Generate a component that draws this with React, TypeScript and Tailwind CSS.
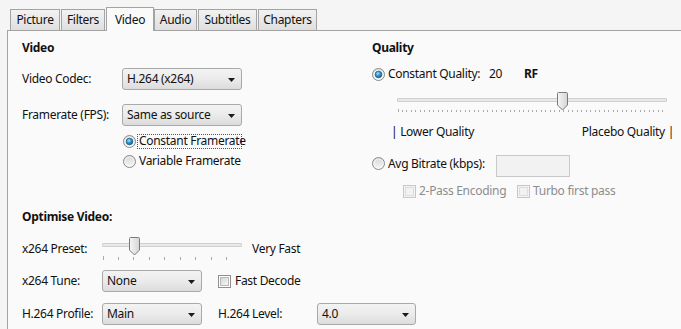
import React, { useId } from "react";

function Radio({ checked }: { checked?: boolean }) {
  const id = useId().replace(/:/g, "");
  return (
    <svg width="13" height="13" viewBox="0 0 13 13" className="shrink-0">
      <defs>
        <linearGradient id={`g${id}`} x1="0" y1="0" x2="0" y2="1">
          <stop offset="0" stopColor="#d6d6d6" />
          <stop offset="1" stopColor="#f7f7f7" />
        </linearGradient>
        <radialGradient id={`b${id}`} cx="0.4" cy="0.35" r="0.7">
          <stop offset="0" stopColor="#9fe0ff" />
          <stop offset="0.5" stopColor="#2b9ad6" />
          <stop offset="1" stopColor="#0b5a8c" />
        </radialGradient>
      </defs>
      <circle cx="6.5" cy="6.5" r="6" fill={`url(#g${id})`} stroke="#8a8a8a" />
      <circle cx="6.5" cy="6.5" r="4.5" fill="none" stroke="#ffffff" strokeOpacity="0.6" />
      {checked && <circle cx="6.5" cy="6.5" r="3.3" fill={`url(#b${id})`} stroke="#1d5f8a" strokeWidth="0.8" />}
    </svg>
  );
}

function Check({ disabled }: { disabled?: boolean }) {
  return (
    <div
      className={
        disabled
          ? "w-[13px] h-[13px] shrink-0 border border-[#c8c8c8] bg-[#f2f2f2] p-[1px]"
          : "w-[13px] h-[13px] shrink-0 border border-[#8e8f8f] bg-white p-[1px]"
      }
    >
      <div
        className={
          disabled
            ? "w-full h-full border border-[#dedede] bg-[#f2f2f2]"
            : "w-full h-full border border-[#b8b8b8] bg-linear-to-br from-[#d8d8d8] to-[#f6f6f6]"
        }
      />
    </div>
  );
}

function Select({ value, w }: { value: string; w: string }) {
  return (
    <div
      className={`${w} h-[22px] shrink-0 relative flex items-center rounded-[3px] border border-[#a9a9a9] bg-linear-to-b from-[#f3f3f3] via-[#ebebeb] to-[#dcdcdc] pl-[4px] text-[#111]`}
    >
      <span>{value}</span>
      <svg width="7" height="4" viewBox="0 0 7 4" className="absolute right-[6px] top-[9px]">
        <path d="M0 0 H7 L3.5 4 Z" fill="#1a1a1a" />
      </svg>
    </div>
  );
}

function Thumb() {
  return (
    <svg width="11" height="19" viewBox="0 0 11 19">
      <defs>
        <linearGradient id="thumbg" x1="0" y1="0" x2="1" y2="0">
          <stop offset="0" stopColor="#f6f6f6" />
          <stop offset="1" stopColor="#d4d4d4" />
        </linearGradient>
      </defs>
      <path d="M1.5 0.5 H9.5 Q10.5 0.5 10.5 1.5 V13 L5.5 18 L0.5 13 V1.5 Q0.5 0.5 1.5 0.5 Z" fill="url(#thumbg)" stroke="#7a7a7a" />
    </svg>
  );
}

function Ticks({ width, count, h }: { width: number; count: number; h: number }) {
  const xs = Array.from({ length: count }, (_, i) => 0.5 + (i * (width - 1)) / (count - 1));
  return (
    <svg width={width} height={h} viewBox={`0 0 ${width} ${h}`}>
      {xs.map((x, i) => (
        <line
          key={i}
          x1={Math.round(x) + 0.5}
          x2={Math.round(x) + 0.5}
          y1={i === 0 || i === count - 1 ? 0 : 1}
          y2={h}
          stroke="#a8a8a8"
        />
      ))}
    </svg>
  );
}

function Track({ w }: { w: string }) {
  return <div className={`${w} h-[4px] border border-[#cfcfcf] bg-[#e9e9e9] rounded-[1px]`} />;
}

const tabs = ["Picture", "Filters", "Video", "Audio", "Subtitles", "Chapters"];
const tabW = ["w-[50px]", "w-[44px]", "w-[48px]", "w-[43px]", "w-[59px]", "w-[59px]"];

export default function App() {
  return (
    <div className="w-[681px] h-[329px] overflow-hidden whitespace-nowrap bg-[#f5f5f5] font-['Segoe_UI','Noto_Sans',sans-serif] text-[12px] tracking-[-0.3px] leading-[16px] text-[#111]">
      {/* tab strip */}
      <div className="flex items-end h-[30px] pl-[10px]">
        {tabs.map((t, i) =>
          t === "Video" ? (
            <div
              key={t}
              className={`${tabW[i]} h-[24px] -mb-[1px] relative z-10 flex items-center justify-center border border-b-0 border-[#a3a3a3] bg-[#fafafa]`}
            >
              {t}
            </div>
          ) : (
            <div
              key={t}
              className={`${tabW[i]} h-[21px] mr-[1px] flex items-center justify-center border border-b-0 border-[#a3a3a3] bg-linear-to-b from-[#f2f2f2] to-[#dfdfdf]`}
            >
              {t}
            </div>
          )
        )}
      </div>
      {/* panel */}
      <div className="ml-[7px] h-[300px] border-l border-t border-[#a3a3a3] bg-[#fafafa] pl-[14px]">
        <div className="flex pt-[7px]">
          {/* left column */}
          <div className="w-[350px] flex flex-col">
            <div className="h-[20px] flex items-center font-bold">Video</div>
            <div className="mt-[10px] h-[22px] flex items-center">
              <div className="w-[100px]">Video Codec:</div>
              <Select value="H.264 (x264)" w="w-[120px]" />
            </div>
            <div className="mt-[14px] h-[22px] flex items-center">
              <div className="w-[100px]">Framerate (FPS):</div>
              <Select value="Same as source" w="w-[120px]" />
            </div>
            <div className="mt-[7px] h-[16px] flex items-center pl-[101px]">
              <Radio checked />
              <div className="ml-[1px] h-[15px] w-[105px] flex items-center border border-dotted border-[#555] pl-[1px]">
                Constant Framerate
              </div>
            </div>
            <div className="mt-[4px] h-[16px] flex items-center pl-[101px]">
              <Radio />
              <span className="ml-[3px]">Variable Framerate</span>
            </div>
          </div>
          {/* right column */}
          <div className="flex flex-col">
            <div className="h-[20px] flex items-center font-bold">Quality</div>
            <div className="mt-[8px] h-[16px] flex items-center">
              <Radio checked />
              <span className="ml-[3px] w-[101px]">Constant Quality:</span>
              <span className="w-[35px]">20</span>
              <span className="font-bold">RF</span>
            </div>
            <div className="mt-[7px] h-[26px] relative ml-[25px] w-[270px]">
              <div className="absolute left-0 top-[9px]">
                <Track w="w-[270px]" />
              </div>
              <div className="absolute left-0 top-[20px]">
                <Ticks width={270} count={61} h={3} />
              </div>
              <div className="absolute left-[160px] top-[3px]">
                <Thumb />
              </div>
            </div>
            <div className="mt-[9px] h-[16px] ml-[19px] w-[283px] flex justify-between">
              <span>| Lower Quality</span>
              <span>Placebo Quality |</span>
            </div>
            <div className="mt-[15px] h-[22px] flex items-center">
              <div className="flex items-center mb-[5px]">
                <Radio />
                <span className="ml-[3px] w-[108px]">Avg Bitrate (kbps):</span>
              </div>
              <div className="w-[74px] h-[22px] border border-[#c9c9c9] bg-[#f2f2f2]" />
            </div>
            <div className="mt-[6px] h-[16px] flex items-center pl-[31px] text-[#8d8d8d]">
              <Check disabled />
              <span className="ml-[3px] w-[98px]">2-Pass Encoding</span>
              <Check disabled />
              <span className="ml-[3px]">Turbo first pass</span>
            </div>
          </div>
        </div>
        {/* Optimise */}
        <div className="mt-[8px] h-[20px] flex items-center font-bold">Optimise Video:</div>
        <div className="mt-[10px] h-[24px] flex items-center">
          <div className="w-[80px]">x264 Preset:</div>
          <div className="relative w-[140px] h-[24px]">
            <div className="absolute left-0 top-[6px]">
              <Track w="w-[140px]" />
            </div>
            <div className="absolute left-0 top-[19px]">
              <Ticks width={140} count={10} h={4} />
            </div>
            <div className="absolute left-[27px] top-0">
              <Thumb />
            </div>
          </div>
          <span className="ml-[10px]">Very Fast</span>
        </div>
        <div className="mt-[9px] h-[22px] flex items-center">
          <div className="w-[80px]">x264 Tune:</div>
          <Select value="None" w="w-[100px]" />
          <div className="ml-[16px] flex items-center">
            <Check />
            <span className="ml-[4px]">Fast Decode</span>
          </div>
        </div>
        <div className="mt-[11px] h-[22px] flex items-center">
          <div className="w-[80px]">H.264 Profile:</div>
          <Select value="Main" w="w-[100px]" />
          <div className="ml-[16px] w-[99px]">H.264 Level:</div>
          <Select value="4.0" w="w-[99px]" />
        </div>
      </div>
    </div>
  );
}
